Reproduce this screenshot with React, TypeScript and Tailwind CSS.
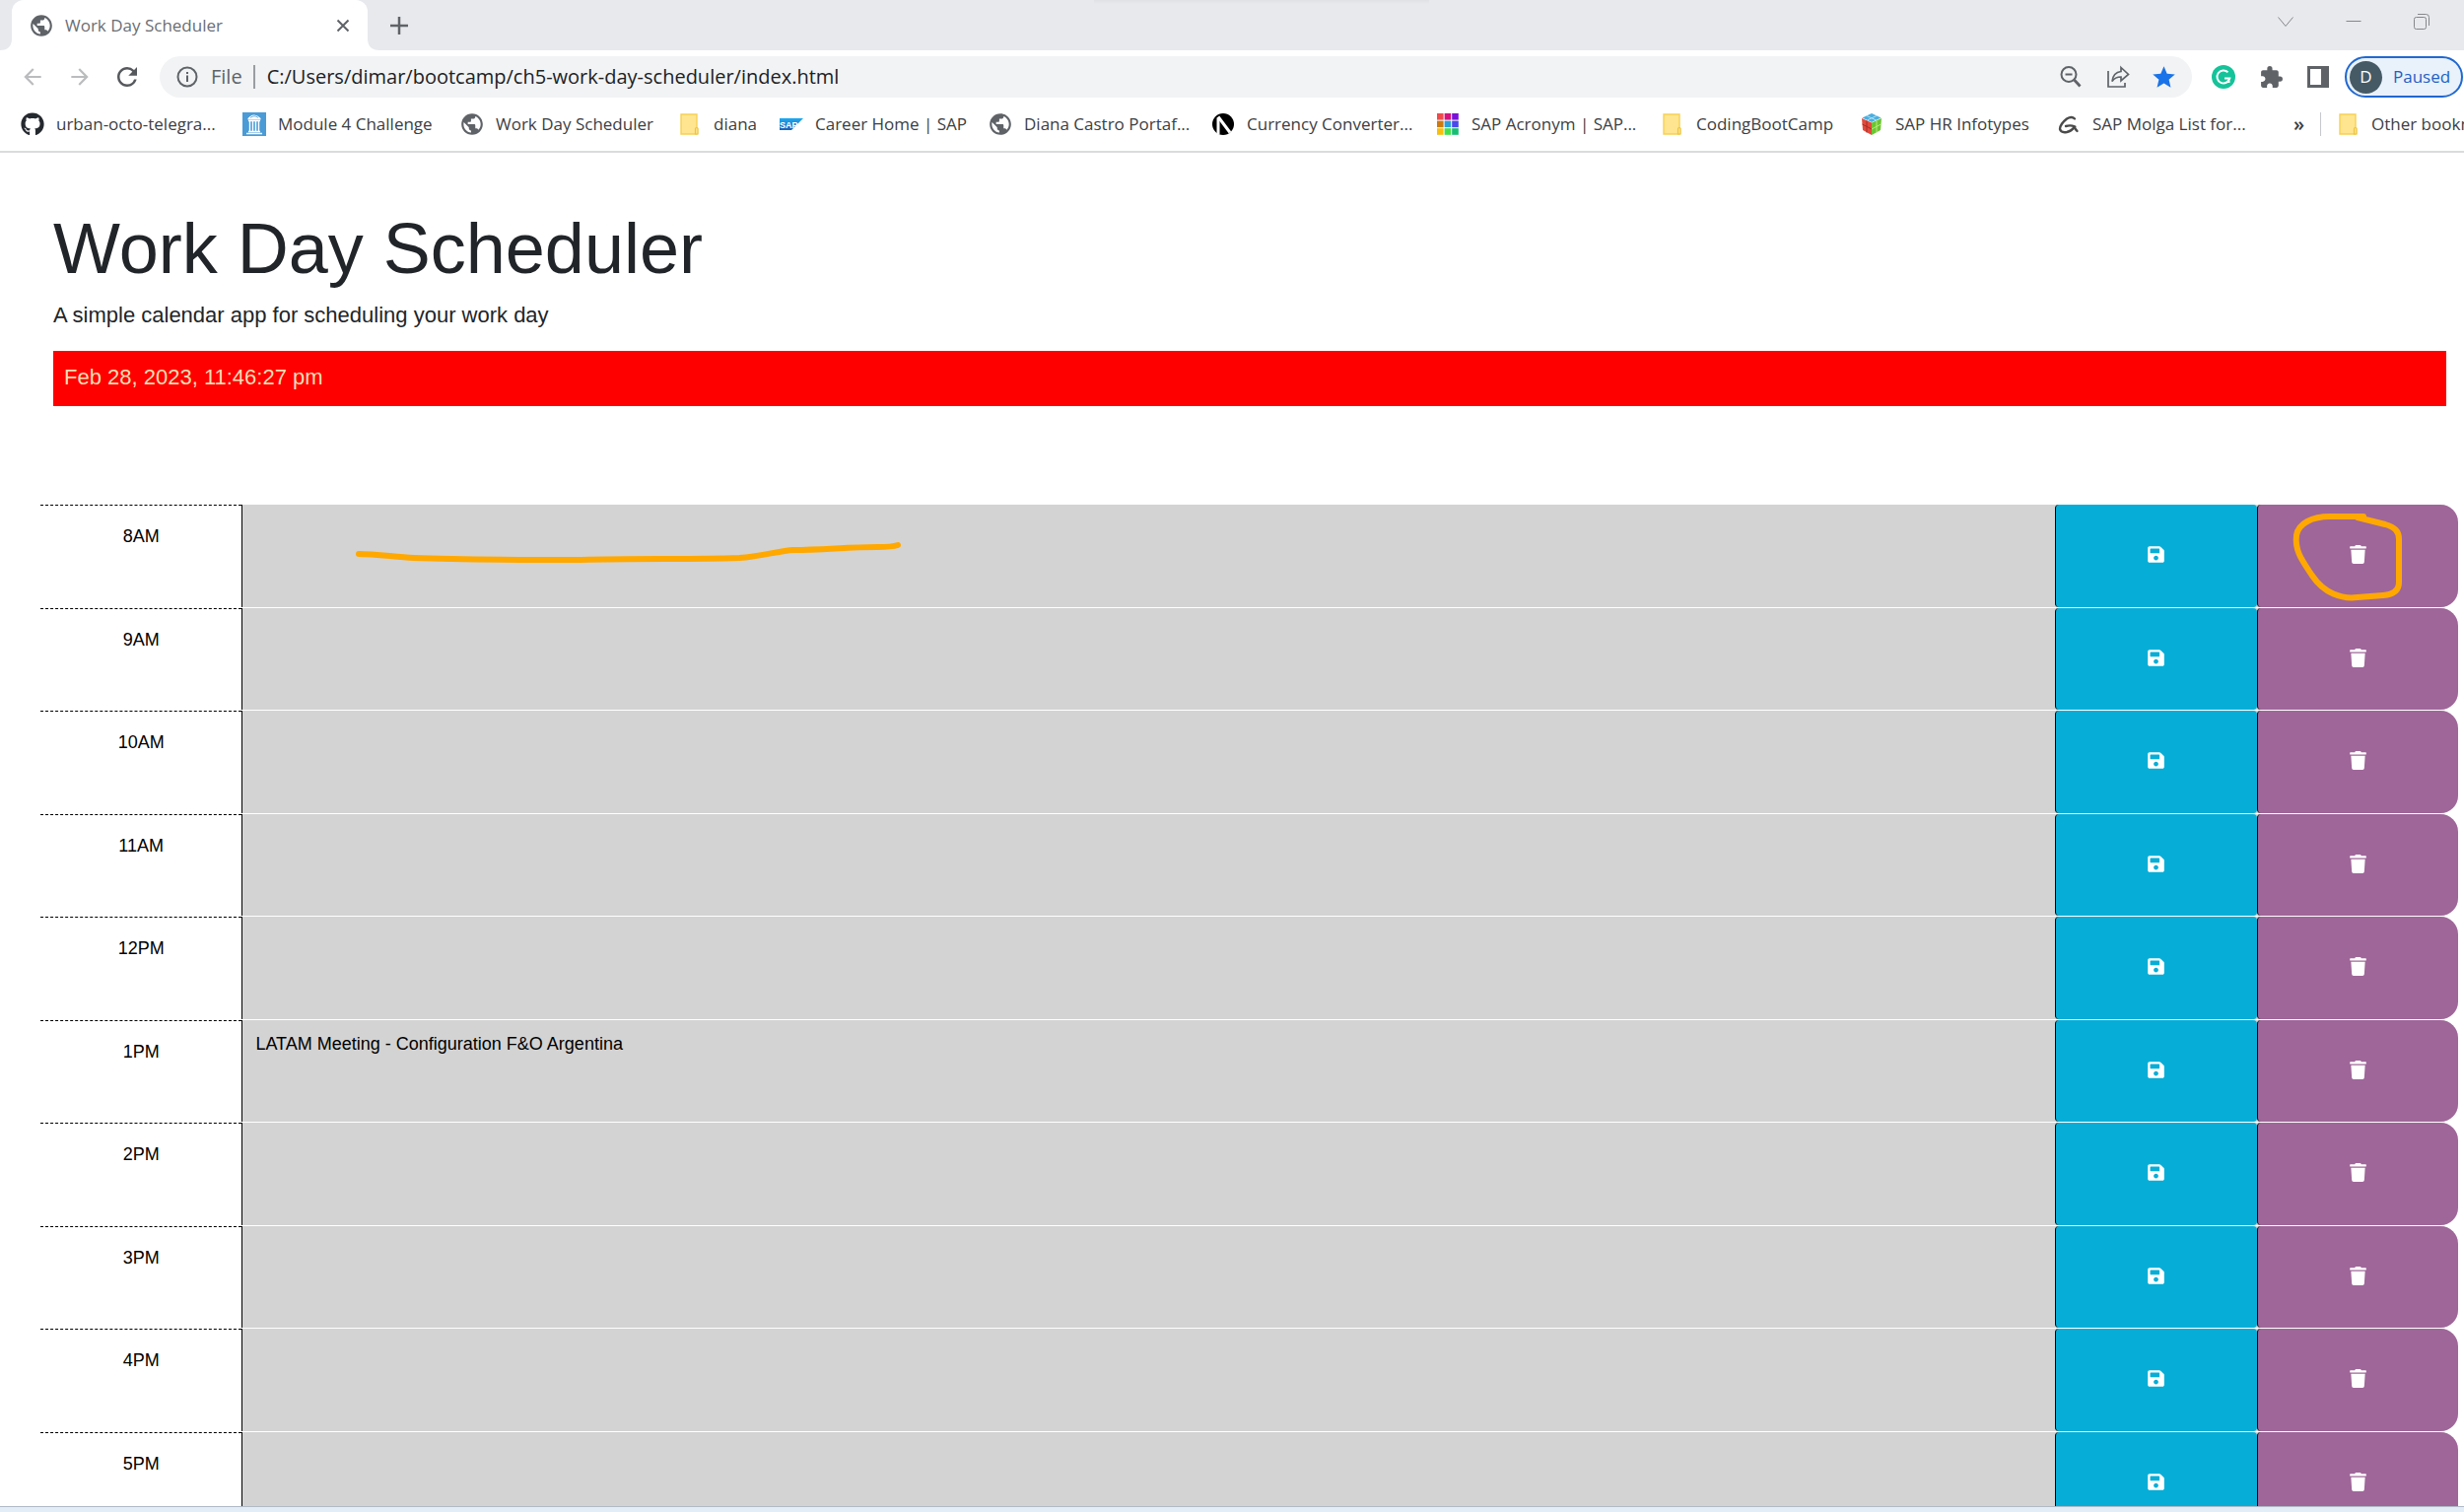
import React from 'react'
import { FaGithub, FaSave, FaTrash } from 'react-icons/fa'
import { MdArrowBack, MdArrowForward, MdExtension, MdPublic, MdRefresh, MdStar } from 'react-icons/md'

function Folder() {
  return (
    <svg viewBox="0 0 24 24" className="size-6" aria-hidden="true">
      <path d="M3 2h16v20H3z" fill="#ffe58f" stroke="#f7d154" strokeWidth="1.4" />
      <path d="M17.5 22v-5.5q0-1 1.3-1t1.3 1V22z" fill="#ffe58f" stroke="#ecc440" strokeWidth="1.2" />
    </svg>
  )
}

function ModuleIcon() {
  return (
    <svg viewBox="0 0 24 24" className="size-6" aria-hidden="true">
      <path fill="#4a9bd6" d="M0 0h24v24H0z" />
      <path d="M5.500 7.500V6q6.500-7 13 0v1.500z" fill="#fff" />
      <path d="M7.500 9v10M10.500 9v10M13.500 9v10M16.500 9v10" stroke="#fff" strokeWidth="1.4" fill="none" />
      <path d="M6 8.500h12M6 19.500h12M4 21.500h16" stroke="#fff" strokeWidth="1.3" fill="none" />
      <path d="M8 5.500q4-3.500 8 0" stroke="#4a9bd6" strokeWidth=".8" fill="none" />
    </svg>
  )
}

function SapIcon() {
  return (
    <svg viewBox="0 0 24 24" className="size-6" aria-hidden="true">
      <defs>
        <linearGradient id="sap" x1="0" y1="0" x2="0" y2="1">
          <stop offset="0" stopColor="#1eaaf0" />
          <stop offset="1" stopColor="#1f5fb8" />
        </linearGradient>
      </defs>
      <path d="M0 6h24L12 18H0z" fill="url(#sap)" />
      <text x="0" y="15.5" fontSize="9" fontWeight="700" fill="#fff" fontFamily="Liberation Sans, sans-serif">SAP</text>
    </svg>
  )
}

function NIcon() {
  return (
    <svg viewBox="0 0 24 24" className="size-6" aria-hidden="true">
      <circle cx="12" cy="12" r="11" fill="#000" />
      <path d="M7 22.500V5.500" stroke="#fff" strokeWidth="3" fill="none" />
      <path d="M7 4.500L19 20.500" stroke="#fff" strokeWidth="3" fill="none" />
    </svg>
  )
}

const tiles = ['#ef4b4b', '#d6127d', '#7a12d6', '#cc7a10', '#2a9fd8', '#4a48ea', '#f8bf0c', '#41e04a', '#16bd74']

function TilesIcon() {
  return (
    <svg viewBox="0 0 24 24" className="size-6" aria-hidden="true">
      {tiles.map((c, i) => (
        <rect key={c} x={1 + (i % 3) * 7.6} y={1 + Math.floor(i / 3) * 7.6} width="6.6" height="6.6" fill={c} />
      ))}
    </svg>
  )
}

function CubeIcon() {
  return (
    <svg viewBox="0 0 24 24" className="size-6" aria-hidden="true">
      <path d="M12 1l9.5 4.5L12 10 2.5 5.5z" fill="#4aaee0" />
      <path d="M2 6l10 4.5V23L3 18z" fill="#e04a3c" />
      <path d="M22 6l-10 4.5V23l9-5z" fill="#6cc433" />
      <path d="M7 3.5l9.5 4.4M17 3.5L7.500 7.900" stroke="#a9e0f5" strokeWidth="1" />
      <path d="M7 8.500v12M2.500 12l9.500 5" stroke="#a82a22" strokeWidth="1" />
      <path d="M17 8.500v12M21.500 12L12 17" stroke="#b8ec7a" strokeWidth="1" />
    </svg>
  )
}

function ScribbleIcon() {
  return (
    <svg viewBox="0 0 24 24" className="size-6" fill="none" stroke="#4a4a4a" strokeWidth="2.400" strokeLinecap="round" aria-hidden="true">
      <path d="M18 6.500Q15 3.500 10 6.500Q3 12 3 17Q4 21 10 20Q15 19 18 14.500Q14 12.500 9 14" />
      <path d="M17.500 14.500Q18.500 17 20.500 19" />
    </svg>
  )
}

const Globe = () => <MdPublic className="size-[26px] shrink-0 text-[#5f6368]" />

const bookmarks: { label: string; icon: React.ReactNode; width: string }[] = [
  { label: 'urban-octo-telegra...', icon: <FaGithub className="size-6 text-[#24292f]" />, width: 'w-[165px]' },
  { label: 'Module 4 Challenge', icon: <ModuleIcon />, width: 'w-[161px]' },
  { label: 'Work Day Scheduler', icon: <Globe />, width: 'w-[161px]' },
  { label: 'diana', icon: <Folder />, width: 'w-[43px]' },
  { label: 'Career Home | SAP', icon: <SapIcon />, width: 'w-[152px]' },
  { label: 'Diana Castro Portaf...', icon: <Globe />, width: 'w-[166px]' },
  { label: 'Currency Converter...', icon: <NIcon />, width: 'w-[168px]' },
  { label: 'SAP Acronym | SAP...', icon: <TilesIcon />, width: 'w-[168px]' },
  { label: 'CodingBootCamp', icon: <Folder />, width: 'w-[142px]' },
  { label: 'SAP HR Infotypes', icon: <CubeIcon />, width: 'w-[140px]' },
  { label: 'SAP Molga List for...', icon: <ScribbleIcon />, width: 'w-[161px]' },
]

function TabStrip() {
  return (
    <div className="relative flex h-[51px] shrink-0 items-end bg-[#e8e9ed] pl-3">
      <div className="absolute left-[1110px] top-0 h-1 w-[340px] bg-gradient-to-b from-[#e0e1e5] to-[#e8e9ed]" />
      <div className="relative flex h-full w-[361px] items-center rounded-t-xl bg-white pl-[17px] pr-[17px]">
        <svg viewBox="0 0 12 12" className="absolute -left-3 bottom-0 size-3 fill-white" aria-hidden="true">
          <path d="M12 0v12H0Q12 12 12 0z" />
        </svg>
        <svg viewBox="0 0 12 12" className="absolute -right-3 bottom-0 size-3 fill-white" aria-hidden="true">
          <path d="M0 0v12h12Q0 12 0 0z" />
        </svg>
        <MdPublic className="size-[26px] text-[#5f6368]" />
        <span className="ml-[11px] flex-1 whitespace-nowrap text-[17px] text-[#6b6e73]">Work Day Scheduler</span>
        <button aria-label="Close tab">
          <svg viewBox="0 0 16 16" className="size-4" stroke="#5f6368" strokeWidth="2" aria-hidden="true">
            <path d="M2.500 2.500l11 11M13.500 2.500l-11 11" />
          </svg>
        </button>
      </div>
      <button aria-label="New tab" className="ml-[22px] flex h-full items-center">
        <svg viewBox="0 0 20 20" className="size-5" stroke="#5f6368" strokeWidth="2.500" aria-hidden="true">
          <path d="M10 1v18M1 10h18" />
        </svg>
      </button>
      <div className="ml-auto flex h-[43px] items-center gap-[53px] self-start pr-[35px] text-[#85878b]">
        <button aria-label="Search tabs">
          <svg viewBox="0 0 16 16" className="size-4" fill="none" stroke="currentColor" aria-hidden="true">
            <path d="M.5 3.500L8 12.500l7.500-9" />
          </svg>
        </button>
        <button aria-label="Minimize">
          <svg viewBox="0 0 16 16" className="size-4" fill="none" stroke="currentColor" aria-hidden="true">
            <path d="M.5 7.500h15" />
          </svg>
        </button>
        <button aria-label="Restore">
          <svg viewBox="0 0 16 16" className="size-4" fill="none" stroke="currentColor" aria-hidden="true">
            <rect x=".5" y="3.500" width="12" height="12" rx="2" />
            <path d="M4 .5h8.500q3 0 3 3V12" />
          </svg>
        </button>
      </div>
    </div>
  )
}

function Toolbar() {
  return (
    <div className="flex h-[54px] shrink-0 items-center pl-5">
      <button aria-label="Back" className="text-[#babcbe]"><MdArrowBack className="size-[26px]" /></button>
      <button aria-label="Forward" className="ml-[22px] text-[#babcbe]"><MdArrowForward className="size-[26px]" /></button>
      <button aria-label="Reload" className="ml-5 text-[#55585c]"><MdRefresh className="size-[30px]" /></button>
      <div className="ml-[18px] flex h-[42px] flex-1 items-center rounded-full bg-[#f1f3f4] pl-[17px] pr-[15px]">
        <svg viewBox="0 0 22 22" className="size-[22px]" fill="none" stroke="#5f6368" strokeWidth="2" aria-hidden="true">
          <circle cx="11" cy="11" r="9.500" />
          <path d="M11 9.500V16M11 6v2" />
        </svg>
        <label htmlFor="address" className="ml-[13px] text-[20px] text-[#5f6368]">File</label>
        <span className="ml-[11px] h-6 w-0.5 bg-[#9a9da1]" />
        <input
          id="address"
          className="ml-3 min-w-0 flex-1 bg-transparent text-[20px] text-[#202124] outline-none"
          defaultValue="C:/Users/dimar/bootcamp/ch5-work-day-scheduler/index.html"
        />
        <button aria-label="Zoom out">
          <svg viewBox="0 0 24 24" className="size-6" fill="none" stroke="#5f6368" strokeWidth="2" aria-hidden="true">
            <circle cx="10" cy="9.500" r="7.500" />
            <path d="M6.500 9.500h7" />
            <path d="M15.500 15l6 6.500" strokeWidth="2.800" />
          </svg>
        </button>
        <button aria-label="Share" className="ml-6">
          <svg viewBox="0 0 24 24" className="size-6" fill="none" stroke="#5f6368" strokeWidth="1.700" aria-hidden="true">
            <path d="M2 6v16h17v-4" />
            <path d="M15 2.500l7.500 7-7.500 6.500v-4q-6 0-9 4.500 1-9 9-10z" />
          </svg>
        </button>
        <button aria-label="Bookmark" className="ml-[21px] text-[#1a73e8]"><MdStar className="size-[27px]" /></button>
      </div>
      <button aria-label="Grammarly" className="ml-5">
        <svg viewBox="0 0 24 24" className="size-6" aria-hidden="true">
          <circle cx="12" cy="12" r="12" fill="#15c39a" />
          <path d="M16.500 7.200A6.500 6.500 0 1 0 18.300 13.500H13M17.500 18v-4.500" fill="none" stroke="#fff" strokeWidth="2" />
        </svg>
      </button>
      <button aria-label="Extensions" className="ml-6 text-[#5f6368]"><MdExtension className="size-[25px]" /></button>
      <button aria-label="Side panel" className="ml-6">
        <svg viewBox="0 0 22 22" className="size-[22px]" aria-hidden="true">
          <path fill="#5f6368" fillRule="evenodd" d="M0 0h22v22H0zM3 3v16h11V3z" />
        </svg>
      </button>
      <button className="ml-4 mr-px flex h-[42px] w-[120px] items-center rounded-full border-2 border-[#2068d0] bg-[#e9f1fb] pl-[3px]">
        <span className="flex size-[33px] items-center justify-center rounded-full bg-[#455a64] text-[17px] text-white">D</span>
        <span className="ml-[11px] text-[17px] text-[#2361c4]">Paused</span>
      </button>
    </div>
  )
}

function BookmarksBar() {
  return (
    <nav aria-label="Bookmarks" className="flex h-[50px] shrink-0 items-center overflow-hidden whitespace-nowrap border-b-2 border-[#dadbdd] pb-1.5 pl-[21px] text-[17px] text-[#3c4043]">
      <div className="flex shrink-0 gap-6">
        {bookmarks.map((b) => (
          <a key={b.label} href="#" className="flex shrink-0 items-center gap-3">
            <span className="flex size-6 shrink-0 items-center justify-center">{b.icon}</span>
            <span className={b.width}>{b.label}</span>
          </a>
        ))}
      </div>
      <button aria-label="More bookmarks" className="ml-auto text-[20px] font-semibold leading-6">»</button>
      <span className="ml-4 h-6 w-px shrink-0 bg-[#c6c8cb]" />
      <a href="#" className="ml-4 flex w-[129px] shrink-0 items-center gap-[11px] overflow-hidden">
        <span className="shrink-0"><Folder /></span>
        <span>Other bookmarks</span>
      </a>
    </nav>
  )
}

const slots = [
  { hour: '8AM', text: '' },
  { hour: '9AM', text: '' },
  { hour: '10AM', text: '' },
  { hour: '11AM', text: '' },
  { hour: '12PM', text: '' },
  { hour: '1PM', text: 'LATAM Meeting - Configuration F&O Argentina' },
  { hour: '2PM', text: '' },
  { hour: '3PM', text: '' },
  { hour: '4PM', text: '' },
  { hour: '5PM', text: '' },
]

function TimeBlock({ hour, text }: { hour: string; text: string }) {
  return (
    <div className="grid grid-cols-12">
      <label htmlFor={hour} className="border-t border-dashed border-black pt-[18px] text-center text-[18px] leading-[27px] text-black">
        {hour}
      </label>
      <div className="col-span-11 grid grid-cols-11 rounded-r-[18px] border-b border-white bg-[#d3d3d3]">
        <textarea
          id={hour}
          defaultValue={text}
          className="col-span-9 h-full resize-none border-l border-black bg-[#d3d3d3] pl-[13px] pt-[11px] text-[18px] leading-[27px] text-black outline-none"
        />
        <button aria-label={`Save ${hour}`} className="flex items-center justify-center rounded border-l border-black bg-[#06aed7] pb-0.5 text-[19px] text-white">
          <FaSave />
        </button>
        <button aria-label={`Delete ${hour}`} className="flex items-center justify-center rounded-l rounded-r-[18px] border-l border-black bg-[#9f6699] pb-0.5 text-[19px] text-white">
          <FaTrash />
        </button>
      </div>
    </div>
  )
}

export default function App() {
  return (
    <div className="flex h-screen flex-col overflow-hidden bg-white font-['Open_Sans',sans-serif]">
      <TabStrip />
      <Toolbar />
      <BookmarksBar />
      <main className="min-h-0 flex-1 overflow-hidden font-['Liberation_Sans',Arial,sans-serif] text-[#212529]">
        <header className="pl-[54px] pr-[18px] pt-[54px]">
          <h1 className="text-[72px] leading-[86px]">Work Day Scheduler</h1>
          <p className="mt-2 text-[22px] leading-[34px]">A simple calendar app for scheduling your work day</p>
          <p className="mt-[19px] bg-[#ff0000] pb-3 pl-[11px] pt-2.5 text-[22px] leading-[34px] text-[#f5deb3]">Feb 28, 2023, 11:46:27 pm</p>
        </header>
        <div className="relative ml-[41px] mr-[6px] mt-[100px] grid h-[1045px] auto-rows-fr">
          {slots.map((s) => (
            <TimeBlock key={s.hour} {...s} />
          ))}
          <svg viewBox="0 0 560 24" className="pointer-events-none absolute left-[319px] top-[36px] h-6 w-[560px]" fill="none" stroke="#ffa800" strokeWidth="6" strokeLinecap="round" aria-hidden="true">
            <path d="M4 14C22 14 40 17 60 18C110 20 170 20 230 20C290 18 340 20 390 18C415 16 430 11 445 10C475 10 500 7 530 7Q545 7 551 5" />
          </svg>
          <svg viewBox="0 0 116 96" className="pointer-events-none absolute right-[54px] top-[5px] h-24 w-[116px]" fill="none" stroke="#ffa800" strokeWidth="6" strokeLinecap="round" strokeLinejoin="round" aria-hidden="true">
            <path d="M74 7H40C22 7 8 14 6 26C4 42 12 52 22 67C34 85 52 91 68 89L94 87C106 86 110 81 110 74V30C110 22 106 18 96 15L68 8" />
          </svg>
        </div>
      </main>
      <div className="h-1.5 shrink-0 border-t border-[#b0bac6] bg-[#e2edf8]" />
    </div>
  )
}
